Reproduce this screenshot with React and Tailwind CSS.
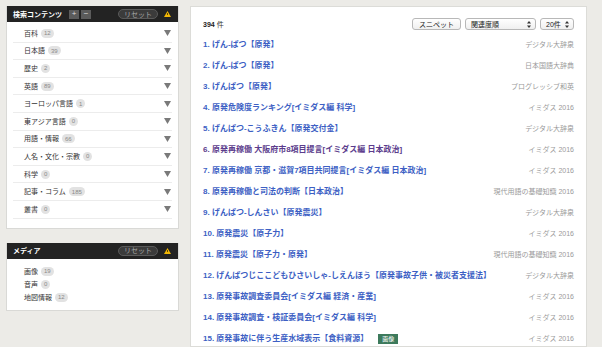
import React from 'react';

const categories = [
  { name: '百科', count: 12 },
  { name: '日本語', count: 39 },
  { name: '歴史', count: 2 },
  { name: '英語', count: 89 },
  { name: 'ヨーロッパ言語', count: 1 },
  { name: '東アジア言語', count: 0 },
  { name: '用語・情報', count: 66 },
  { name: '人名・文化・宗教', count: 0 },
  { name: '科学', count: 0 },
  { name: '記事・コラム', count: 185 },
  { name: '叢書', count: 0 },
];

const media = [
  { name: '画像', count: 19 },
  { name: '音声', count: 0 },
  { name: '地図情報', count: 12 },
];

const results = [
  { title: 'げん-ぱつ【原発】', source: 'デジタル大辞泉' },
  { title: 'げん-ぱつ【原発】', source: '日本国語大辞典' },
  { title: 'げんぱつ【原発】', source: 'プログレッシブ和英' },
  { title: '原発危険度ランキング[イミダス編 科学]', source: 'イミダス 2016' },
  { title: 'げんぱつ-こうふきん【原発交付金】', source: 'デジタル大辞泉' },
  { title: '原発再稼働 大阪府市8項目提言[イミダス編 日本政治]', source: 'イミダス 2016', visited: true },
  { title: '原発再稼働 京都・滋賀7項目共同提言[イミダス編 日本政治]', source: 'イミダス 2016' },
  { title: '原発再稼働と司法の判断【日本政治】', source: '現代用語の基礎知識 2016' },
  { title: 'げんぱつ-しんさい【原発震災】', source: 'デジタル大辞泉' },
  { title: '原発震災【原子力】', source: 'イミダス 2016' },
  { title: '原発震災【原子力・原発】', source: '現代用語の基礎知識 2016' },
  { title: 'げんぱつじここどもひさいしゃ-しえんほう【原発事故子供・被災者支援法】', source: 'デジタル大辞泉' },
  { title: '原発事故調査委員会[イミダス編 経済・産業]', source: 'イミダス 2016' },
  { title: '原発事故調査・検証委員会[イミダス編 科学]', source: 'イミダス 2016' },
  { title: '原発事故に伴う生産水域表示【食料資源】', source: 'イミダス 2016', image: true },
];

// small yellow warning mark in the panel headers
const Warn = () => (
  <svg width="7" height="6" viewBox="0 0 7 6">
    <polygon points="3.5,0 7,6 0,6" fill="#f2b705" />
    <rect x="3.1" y="2" width="0.8" height="2" fill="#3a2c00" />
  </svg>
);

const Arrow = () => (
  <svg width="7" height="6" viewBox="0 0 7 6">
    <polygon points="0,0 7,0 3.5,6" fill="#7a7a7a" />
  </svg>
);

const UpDown = () => (
  <svg width="4" height="7" viewBox="0 0 4 7">
    <polygon points="2,0 4,2.6 0,2.6" fill="#333" />
    <polygon points="0,4.4 4,4.4 2,7" fill="#333" />
  </svg>
);

const Count = ({ n }) => (
  <span className="ml-[3px] inline-flex h-[9px] items-center rounded-full bg-[#e2e2e2] px-[3px] text-[6px] leading-none text-[#8a8a8a]">
    {n}
  </span>
);

const ResetButton = () => (
  <span className="flex h-[10px] items-center rounded-full border border-[#5a5a5a] bg-[#3b3b3b] px-[5px] text-[7px] leading-none text-[#a8a8a8]">
    リセット
  </span>
);

const PanelHeader = ({ title, tools }) => (
  <div className="flex h-[16px] items-center bg-[#232323] pl-[6px] pr-[7px]">
    <span className="text-[7px] font-bold leading-none text-white">{title}</span>
    {tools && (
      <div className="ml-[7px] flex gap-[2px]">
        <span className="flex h-[9px] w-[10px] items-center justify-center bg-[#5b5b5b] text-[8px] leading-none text-[#ddd]">+</span>
        <span className="flex h-[9px] w-[10px] items-center justify-center bg-[#5b5b5b] text-[8px] leading-none text-[#ddd]">−</span>
      </div>
    )}
    <div className="ml-auto flex items-center gap-[6px]">
      <ResetButton />
      <Warn />
    </div>
  </div>
);

const App = () => {
  return (
    <div className="flex h-[347px] w-[602px] gap-[11px] overflow-hidden bg-[#ecebe7] pl-[6px] pt-[6px] font-[family-name:'Liberation_Sans','Noto_Sans_CJK_JP',sans-serif]">
      {/* Sidebar */}
      <div className="flex w-[173px] shrink-0 flex-col gap-[14px]">
        <div className="border border-t-0 border-[#d9d9d6] bg-white">
          <PanelHeader title="検索コンテンツ" tools />
          <div className="px-[6px] pb-[9px] pt-[3px]">
            {categories.map((c) => (
              <div key={c.name} className="flex h-[17.6px] items-center border-b border-[#ececec] pl-[11px] pr-[1px]">
                <span className="text-[7px] leading-none text-[#333]">{c.name}</span>
                <Count n={c.count} />
                <span className="ml-auto flex"><Arrow /></span>
              </div>
            ))}
          </div>
        </div>

        <div className="border border-t-0 border-[#d9d9d6] bg-white">
          <PanelHeader title="メディア" />
          <div className="px-[17px] pb-[6px] pt-[6px]">
            {media.map((m) => (
              <div key={m.name} className="flex h-[13px] items-center">
                <span className="text-[7px] leading-none text-[#333]">{m.name}</span>
                <Count n={m.count} />
              </div>
            ))}
          </div>
        </div>
      </div>

      {/* Results */}
      <div className="w-[397px] shrink-0 border border-[#dcdcd8] bg-white px-[12px] pt-[11px]">
        <div className="flex h-[12px] items-center">
          <span className="text-[7px] leading-none text-[#333]">
            <span className="font-bold text-[#222]">394</span> 件
          </span>
          <div className="ml-auto flex h-[12px] gap-[4px]">
            <span className="flex w-[49px] items-center justify-center rounded-[3px] border border-[#b8b8b8] bg-gradient-to-b from-white to-[#f0f0f0] text-[7px] leading-none text-[#222]">
              スニペット
            </span>
            <span className="flex w-[71px] items-center rounded-[3px] border border-[#b8b8b8] bg-gradient-to-b from-white to-[#f0f0f0] pl-[5px] pr-[4px] text-[7px] leading-none text-[#222]">
              関連度順
              <span className="ml-auto flex"><UpDown /></span>
            </span>
            <span className="flex w-[34px] items-center rounded-[3px] border border-[#b8b8b8] bg-gradient-to-b from-white to-[#f0f0f0] pl-[5px] pr-[4px] text-[7px] leading-none text-[#222]">
              20件
              <span className="ml-auto flex"><UpDown /></span>
            </span>
          </div>
        </div>

        <div className="mt-[4px]">
          {results.map((r, i) => (
            <div key={i} className="flex h-[21px] items-center">
              <span className={`whitespace-nowrap text-[8px] font-bold leading-none ${r.visited ? 'text-[#5b3c8c]' : 'text-[#3d5fc4]'}`}>
                {i + 1}. {r.title}
              </span>
              {r.image && (
                <span className="ml-[10px] flex h-[10px] w-[20px] items-center justify-center bg-[#3d7a5c] text-[6px] leading-none text-white">
                  画像
                </span>
              )}
              <span className="ml-auto whitespace-nowrap pl-[6px] text-[7px] leading-none text-[#9a9a9a]">{r.source}</span>
            </div>
          ))}
        </div>
      </div>
    </div>
  );
};

export default App;
